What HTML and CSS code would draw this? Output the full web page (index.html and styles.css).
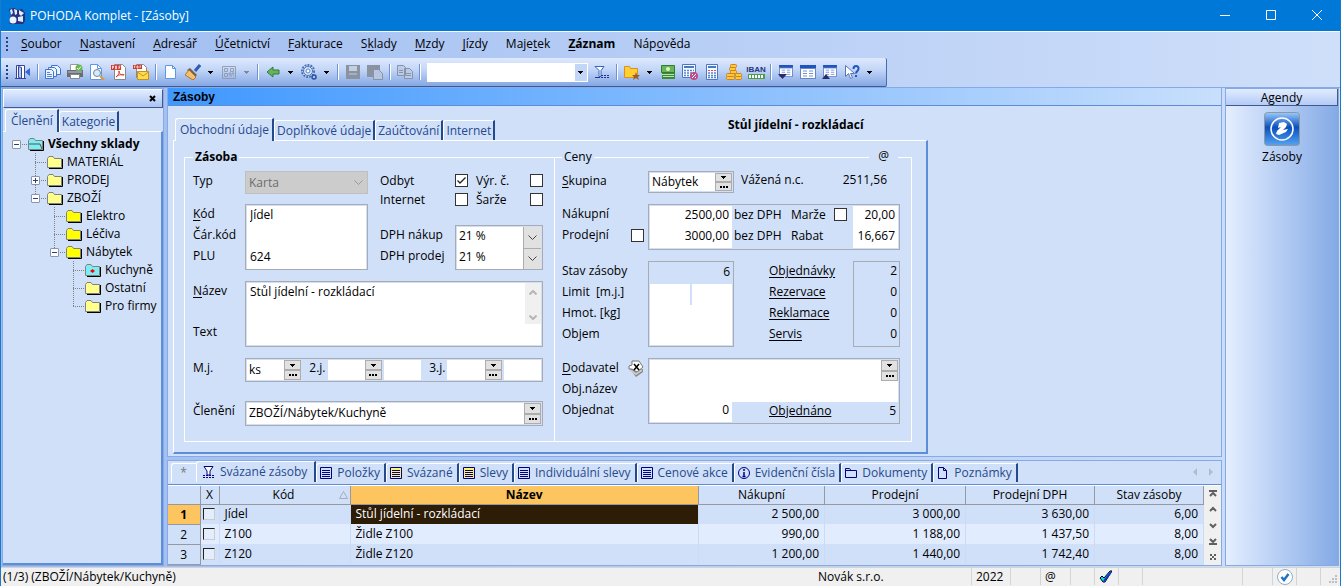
FILE: index.html
```
<!DOCTYPE html>
<html lang="cs">

<head>
    <meta charset="UTF-8">
    <meta name="viewport" content="width=device-width, initial-scale=1">
    <title>POHODA Komplet - [Zásoby]</title>
    <link rel="stylesheet" href="styles.css">
</head>

<body>
    <!-- Sdílené ikony -->
    <svg class="sprite" aria-hidden="true">
        <symbol id="caret" viewBox="0 0 5 3"><path d="M0 0h5v1H0zM1 1h3v1H1zM2 2h1v1H2z" fill="currentColor"/></symbol>
        <symbol id="dots" viewBox="0 0 8 2"><path d="M0 0h2v2H0zM3 0h2v2H3zM6 0h2v2H6z" fill="currentColor"/></symbol>
        <symbol id="folder" viewBox="0 0 16 13">
            <path d="M2 12.500h13.500V3" fill="none" stroke="#000" stroke-width="1"/>
            <path d="M.5 11.500V2.500L2 .5h4l1.500 2h7v9z" fill="var(--folder, #ffff8c)" stroke="#808080"/>
        </symbol>
        <symbol id="list" viewBox="0 0 12 12">
            <path d="M.5.5h11v11H.5z" fill="var(--list, none)" stroke="#000080"/>
            <path d="M2 3.500h8M2 5.500h8M2 7.500h8M2 9.500h8" stroke="#000080"/>
        </symbol>
        <symbol id="window" viewBox="0 0 16 14"><path d="M0 0h16v14H0z" fill="#6884c4"/><path d="M1 4h14v9H1z" fill="#fff"/><path d="M0 0h16v3H0z" fill="#1f53c0"/><path d="M3 6h4M9 6h4M3 8.500h4M9 8.500h4M3 11h4M9 11h4" stroke="#6f93d8"/></symbol>
    </svg>

    <header class="titlebar">
        <svg class="logo" viewBox="0 0 16 16"><path d="M0 1l5-1 4 2 4-1 3 4v8l-2 3H1L0 12l2-4z" fill="#2b2f7c"/><circle cx="4" cy="12" r="3.500" fill="#e8f4ff"/><path d="M1 2l2-1 1 4-2 2zM5 1l3 1v4L6 7zM10 2l5 3-3 3-2-2zM9 9l5-1v6l-5-1z" fill="#d8eeff"/></svg>
        <h1>POHODA Komplet - [Zásoby]</h1>
        <div class="window-buttons">
            <button type="button" aria-label="Minimalizovat"><svg viewBox="0 0 10 10"><path d="M0 5.500h10"/></svg></button>
            <button type="button" aria-label="Maximalizovat"><svg viewBox="0 0 10 10"><path d="M.5.5h9v9h-9z"/></svg></button>
            <button type="button" aria-label="Zavřít"><svg viewBox="0 0 10 10"><path d="M0 0l10 10M10 0L0 10"/></svg></button>
        </div>
    </header>

    <div class="bars">
        <nav class="menu">
            <span class="grip"></span>
            <a href="#"><u>S</u>oubor</a>
            <a href="#"><u>N</u>astavení</a>
            <a href="#"><u>A</u>dresář</a>
            <a href="#"><u>Ú</u>četnictví</a>
            <a href="#"><u>F</u>akturace</a>
            <a href="#">S<u>k</u>lady</a>
            <a href="#"><u>M</u>zdy</a>
            <a href="#"><u>J</u>ízdy</a>
            <a href="#">Maje<u>t</u>ek</a>
            <a href="#" class="strong"><u>Z</u>áznam</a>
            <a href="#">Náp<u>o</u>věda</a>
        </nav>

        <div class="toolbar">
            <span class="grip"></span>
            <button type="button" class="tool" aria-label="Konec"><svg viewBox="0 0 16 16"><path d="M1.500 14.500v-13h8v13" fill="#fff" stroke="#34459b"/><path d="M3.500 2.500l3 1v11l-3-1z" fill="#b8c6ea" stroke="#34459b"/><path d="M0 14.500h11" stroke="#34459b"/><path d="M15 4v8l-5-4z" fill="#3565d8"/></svg></button>
            <i class="sep"></i>
            <button type="button" class="tool" aria-label="Agendy"><svg viewBox="0 0 16 16"><g fill="#eaf2ff" stroke="#3d76cc"><path d="M6.500 1.500h6l3 3v6h-9z"/><path d="M3.500 3.500h6l2 2v7h-8z"/><path d="M.5 5.500h6l2 2v7h-8z"/></g><path d="M2 8.500h3M2 10.500h5M2 12.500h5" stroke="#5a88d0"/></svg></button>
            <button type="button" class="tool" aria-label="Tisk"><svg viewBox="0 0 16 16"><path d="M3.500.5h8v6h-8z" fill="#fff" stroke="#999"/><path d="M0 6h16v7H0z" fill="#686d75"/><path d="M1 8h14" stroke="#c4c8cc"/><path d="M3.500 10.500h9v4h-9z" fill="#fff" stroke="#888"/><circle cx="12" cy="4" r="3.500" fill="#69b657"/><path d="M10 4l1.500 1.500 2.500-3" fill="none" stroke="#fff"/></svg></button>
            <button type="button" class="tool" aria-label="Náhled"><svg viewBox="0 0 16 16"><path d="M1.500.5h7l4 4v11h-11z" fill="#fff" stroke="#5f98e0"/><path d="M8.500.5v4h4" fill="none" stroke="#5f98e0"/><circle cx="8" cy="9" r="3.500" fill="#d5eaff" stroke="#71869f"/><path d="M11 12l4 4" stroke="#e29931" stroke-width="2"/></svg></button>
            <button type="button" class="tool" aria-label="PDF"><svg viewBox="0 0 16 16"><path d="M3.500.5h8l3 3v12h-11z" fill="#fff" stroke="#888"/><path d="M0 1h10v5H0z" fill="#d63a2f"/><path d="M1.500 5V2h1v1.500h-1M4.500 2v3h1V2zM8 5V2h1.500M8 3.500h1" fill="none" stroke="#fff" stroke-width=".7"/><path d="M5 13c3-2 4-6 3-6s1 5 5 4c1-1-5-1-8 2z" fill="none" stroke="#d63a2f"/></svg></button>
            <button type="button" class="tool" aria-label="PDF e-mailem"><svg viewBox="0 0 16 16"><path d="M3.500.5h7l3 3v10h-10z" fill="#fff" stroke="#888"/><path d="M0 1h9v4H0z" fill="#d63a2f"/><path d="M1.500 4V2h1M4 2v2h1V2zM7 4V2h1" fill="none" stroke="#fff" stroke-width=".7"/><path d="M4.500 7.500h11v8h-11z" fill="#ffdc4d" stroke="#c9901a"/><path d="M4.500 8l5.500 4 5.500-4" fill="none" stroke="#c9901a"/></svg></button>
            <i class="sep"></i>
            <button type="button" class="tool" aria-label="Nový"><svg viewBox="0 0 16 16"><path d="M2.500 1.500h7l3 3v10h-10z" fill="#fff" stroke="#5f98e0"/><path d="M9.500 1.500v3h3" fill="none" stroke="#5f98e0"/></svg></button>
            <button type="button" class="tool" aria-label="Vyčistit"><svg viewBox="0 0 16 16"><path d="M15 1l-5 6" stroke="#315caf" stroke-width="3"/><path d="M5 4l7 7-2 2-8-7z" fill="#6e6258"/><path d="M4 6l7 7-3 3-8-5z" fill="#f2c070" stroke="#b9731c"/></svg></button>
            <button type="button" class="drop" aria-label="Možnosti"><svg><use href="#caret"/></svg></button>
            <button type="button" class="tool gray" aria-label="QR kód"><svg viewBox="0 0 16 16"><path d="M1.500 2.500h13v12h-13z" fill="none" stroke="#8b93a2"/><path d="M3.500 4.500h3v3h-3zM9.500 4.500h3v3h-3zM3.500 9.500h3v3h-3zM8 9h2v2H8zM11 9h2v1h-2zM9 12h2M12 12h1" fill="none" stroke="#8b93a2"/></svg></button>
            <button type="button" class="drop gray" aria-label="Možnosti"><svg><use href="#caret"/></svg></button>
            <i class="sep"></i>
            <button type="button" class="tool" aria-label="Zpět"><svg viewBox="0 0 16 16"><path d="M2 8l6-5v3h6v4H8v3z" fill="#68b35c" stroke="#317c35"/></svg></button>
            <button type="button" class="drop" aria-label="Možnosti"><svg><use href="#caret"/></svg></button>
            <button type="button" class="tool" aria-label="Nastavení"><svg viewBox="0 0 16 16"><circle cx="7" cy="7" r="6" fill="#e8f0fc" stroke="#4872b8" stroke-width="2" stroke-dasharray="2 1"/><circle cx="7" cy="7" r="4.500" fill="#d5e3f8" stroke="#4872b8"/><circle cx="7" cy="7" r="2" fill="#fff" stroke="#5d82c4"/><circle cx="13" cy="13" r="2" fill="#a8c4ef" stroke="#274f9e" stroke-width="1.500"/></svg></button>
            <button type="button" class="drop" aria-label="Možnosti"><svg><use href="#caret"/></svg></button>
            <i class="sep"></i>
            <button type="button" class="tool" aria-label="Uložit"><svg viewBox="0 0 16 16"><path d="M1 1h14v14H1z" fill="#8a93a2"/><path d="M4 2h8v5H4z" fill="#c3cedf"/><path d="M4 10h8" stroke="#c3cedf"/></svg></button>
            <button type="button" class="tool" aria-label="Uložit kopii"><svg viewBox="0 0 16 16"><path d="M0 1h13v12H0z" fill="#8a93a2"/><path d="M6.500 5.500h5l4 4v6h-9z" fill="#b7c7e3" stroke="#8a93a2"/></svg></button>
            <i class="sep"></i>
            <button type="button" class="tool" aria-label="Kopírovat"><svg viewBox="0 0 16 16"><path d="M.5 1.500h6l2 2v8h-8zM7.500 4.500h5l3 3v7h-8z" fill="#bccbe7" stroke="#8793a8"/><path d="M2 6.500h4M2 8.500h4M9 9.500h5M9 11.500h5" stroke="#8793a8"/></svg></button>
            <i class="sep"></i>
            <div class="search">
                <input type="text" aria-label="Hledat">
                <button type="button" aria-label="Rozbalit"><svg><use href="#caret"/></svg></button>
            </div>
            <button type="button" class="tool" aria-label="Filtr"><svg viewBox="0 0 16 16"><path d="M1 2.500h9L7 6.500v6H5v-6z" fill="#fff" stroke="#3565c0"/><path d="M1 13.500h5M7 11.500h2M10 11.500h2M13 11.500h2M7 13.500h2M10 13.500h2M13 13.500h2" stroke="#27348b"/></svg></button>
            <i class="sep"></i>
            <button type="button" class="tool" aria-label="Oblíbené"><svg viewBox="0 0 16 16"><path d="M.5 13.500v-11h5l1 2h7v9z" fill="#ffd02e" stroke="#dc8d2a"/><path d="M12 8l1 3h3l-2 2 1 3-3-2-3 2 1-3-2-2h3z" fill="#99602c"/></svg></button>
            <button type="button" class="drop" aria-label="Možnosti"><svg><use href="#caret"/></svg></button>
            <button type="button" class="tool" aria-label="Peníze"><svg viewBox="0 0 16 16"><path d="M2 8h13v7H2z" fill="#3a8b3d"/><path d="M2 10.500h12M3 12.500h11" stroke="#bee0a3"/><path d="M1.500 1.500h13v7h-13z" fill="#69b657" stroke="#337c36"/><circle cx="8" cy="5" r="2" fill="#e0f2c8"/></svg></button>
            <button type="button" class="tool" aria-label="Kalkulačka daně"><svg viewBox="0 0 16 16"><path d="M.5.5h13v13H.5z" fill="#f4f8ff" stroke="#4a78c2"/><path d="M2 3h10" stroke="#4a78c2" stroke-width="2"/><path d="M2 6.500h10M2 9h10M2 11.500h10" stroke="#5d87cc" stroke-width="1.500" stroke-dasharray="2 1"/><circle cx="12" cy="12" r="4" fill="#be4c87"/><path d="M10 14l4-4M10 10.500h1M13 13.500h1" stroke="#fff"/></svg></button>
            <button type="button" class="tool" aria-label="Kalkulačka"><svg viewBox="0 0 16 16"><path d="M2.500.5h11v15h-11z" fill="#f4f8ff" stroke="#4a78c2"/><path d="M4 3h8" stroke="#4a78c2" stroke-width="2"/><path d="M4 6.500h8" stroke="#e05048" stroke-dasharray="2 1"/><path d="M4 9h8M4 11.500h8M4 13.500h8" stroke="#5d87cc" stroke-width="1.500" stroke-dasharray="2 1"/></svg></button>
            <button type="button" class="tool" aria-label="Pokladna"><svg viewBox="0 0 16 16"><g fill="#ffc93a" stroke="#cd831b"><rect x="4.500" y=".5" width="6" height="3" rx="1"/><rect x="3.500" y="3.500" width="6" height="3" rx="1"/><rect x="4.500" y="6.500" width="6" height="3" rx="1"/><rect x=".5" y="9.500" width="8" height="3" rx="1"/><rect x=".5" y="12.500" width="8" height="3" rx="1"/><rect x="9.500" y="9.500" width="6" height="3" rx="1"/><rect x="9.500" y="12.500" width="6" height="3" rx="1"/></g></svg></button>
            <button type="button" class="tool iban" aria-label="Kontrola IBAN">IBAN<span></span></button>
            <i class="sep"></i>
            <button type="button" class="tool" aria-label="Okno dolů"><svg viewBox="0 0 16 16"><use href="#window" y="1" width="16" height="12"/><path d="M0 10h9l-4.500 5z" fill="#282c68"/></svg></button>
            <button type="button" class="tool" aria-label="Okno"><svg viewBox="0 0 16 16"><use href="#window" y="1" width="16" height="14"/></svg></button>
            <button type="button" class="tool" aria-label="Okno nahoru"><svg viewBox="0 0 16 16"><use href="#window" y="1" width="16" height="12"/><path d="M0 15h8l-4-5z" fill="#282c68"/></svg></button>
            <button type="button" class="tool" aria-label="Nápověda"><svg viewBox="0 0 16 16"><path d="M1.500 1.500v11l3-3 2 5 2-1-2-4h4z" fill="#fff" stroke="#5778b8"/><path d="M9.500 5c0-4 5.500-4 5 0 0 2-2.500 2-2.500 4.500M12 11v2" fill="none" stroke="#2455bd" stroke-width="2"/></svg></button>
            <button type="button" class="drop" aria-label="Možnosti"><svg><use href="#caret"/></svg></button>
        </div>
    </div>

    <main>
        <aside class="tree-panel">
            <div class="panel-head"><button type="button" aria-label="Zavřít panel"><svg viewBox="0 0 7 7"><path d="M1 1l5 5M6 1L1 6"/></svg></button></div>
            <div class="tabs">
                <button type="button" class="tab active">Členění</button>
                <button type="button" class="tab">Kategorie</button>
            </div>
            <div class="tree-body">
                <ul class="tree">
                    <li>
                        <div class="node root"><button type="button" class="toggle" aria-label="Sbalit"></button><svg class="cyan"><use href="#folder"/><path d="M1 6h11l2 5" fill="none" stroke="#555"/></svg>Všechny sklady</div>
                        <ul>
                            <li><div class="node"><i></i><svg><use href="#folder"/></svg>MATERIÁL</div></li>
                            <li><div class="node"><button type="button" class="toggle plus" aria-label="Rozbalit"></button><svg><use href="#folder"/></svg>PRODEJ</div></li>
                            <li>
                                <div class="node"><button type="button" class="toggle" aria-label="Sbalit"></button><svg><use href="#folder"/></svg>ZBOŽÍ</div>
                                <ul>
                                    <li><div class="node"><i></i><svg class="yellow"><use href="#folder"/></svg>Elektro</div></li>
                                    <li><div class="node"><i></i><svg class="yellow"><use href="#folder"/></svg>Léčiva</div></li>
                                    <li>
                                        <div class="node"><button type="button" class="toggle" aria-label="Sbalit"></button><svg class="yellow"><use href="#folder"/></svg>Nábytek</div>
                                        <ul>
                                            <li><div class="node"><i></i><svg class="cyan"><use href="#folder"/><path d="M5 7l2.500-2L10 7 7.500 9z" fill="#f00"/></svg>Kuchyně</div></li>
                                            <li><div class="node"><i></i><svg><use href="#folder"/></svg>Ostatní</div></li>
                                            <li><div class="node"><i></i><svg><use href="#folder"/></svg>Pro firmy</div></li>
                                        </ul>
                                    </li>
                                </ul>
                            </li>
                        </ul>
                    </li>
                </ul>
            </div>
        </aside>

        <div class="center">
            <section class="agenda">
                <h2>Zásoby</h2>
                <form class="form">
                    <div class="form-head">
                        <div class="tabs">
                            <button type="button" class="tab active">Obchodní údaje</button>
                            <button type="button" class="tab">Doplňkové údaje</button>
                            <button type="button" class="tab">Zaúčtování</button>
                            <button type="button" class="tab">Internet</button>
                        </div>
                        <strong>Stůl jídelní - rozkládací</strong>
                    </div>
                    <div class="sheet">
                        <fieldset class="stock">
                            <legend>Zásoba</legend>
                            <div class="upper">
                                <div class="stack">
                                    <div class="row">
                                        <div class="labels"><label for="typ">Typ</label></div>
                                        <select id="typ" class="typ" disabled><option>Karta</option></select>
                                    </div>
                                    <div class="row">
                                        <div class="labels"><label for="kod"><u>K</u>ód</label><label for="ean">Čár.kód</label><label for="plu">PLU</label></div>
                                        <div class="box codes"><input id="kod" value="Jídel"><input id="ean"><input id="plu" value="624"></div>
                                    </div>
                                </div>
                                <div class="stack options">
                                    <div class="checks">
                                        <label for="odbyt">Odbyt</label><input type="checkbox" id="odbyt" checked>
                                        <label for="vyr">Výr. č.</label><input type="checkbox" id="vyr">
                                        <label for="inet">Internet</label><input type="checkbox" id="inet">
                                        <label for="sarze">Šarže</label><input type="checkbox" id="sarze">
                                    </div>
                                    <div class="row">
                                        <div class="labels vat"><label for="dphn">DPH nákup</label><label for="dphp">DPH prodej</label></div>
                                        <div class="box vat-box">
                                            <select id="dphn"><option>21 %</option></select>
                                            <select id="dphp"><option>21 %</option></select>
                                        </div>
                                    </div>
                                </div>
                            </div>
                            <div class="row">
                                <div class="labels spread"><label for="nazev"><u>N</u>ázev</label><label for="text">Text</label></div>
                                <div class="box grow">
                                    <div class="name-line">
                                        <textarea id="nazev">Stůl jídelní - rozkládací</textarea>
                                        <div class="scroll"><svg viewBox="0 0 8 5"><path d="M.5 4.500L4 1l3.500 3.500"/></svg><svg viewBox="0 0 8 5"><path d="M.5.5L4 4 7.500.5"/></svg></div>
                                    </div>
                                    <input id="text">
                                </div>
                            </div>
                            <div class="row">
                                <div class="labels"><label for="mj">M.j.</label></div>
                                <div class="box grow units">
                                    <input id="mj" value="ks"><span class="pick"><button type="button" aria-label="Rozbalit"><svg><use href="#caret"/></svg></button><button type="button" aria-label="Vybrat"><svg class="dots"><use href="#dots"/></svg></button></span>
                                    <label for="mj2">2.j.</label>
                                    <input id="mj2"><span class="pick"><button type="button" aria-label="Rozbalit"><svg><use href="#caret"/></svg></button><button type="button" aria-label="Vybrat"><svg class="dots"><use href="#dots"/></svg></button></span>
                                    <input class="coef" aria-label="Koeficient 2.j.">
                                    <label for="mj3">3.j.</label>
                                    <input id="mj3"><span class="pick"><button type="button" aria-label="Rozbalit"><svg><use href="#caret"/></svg></button><button type="button" aria-label="Vybrat"><svg class="dots"><use href="#dots"/></svg></button></span>
                                    <input class="coef" aria-label="Koeficient 3.j.">
                                </div>
                            </div>
                            <div class="row group">
                                <div class="labels"><label for="cleneni">Členění</label></div>
                                <div class="box grow combo">
                                    <input id="cleneni" value="ZBOŽÍ/Nábytek/Kuchyně"><span class="pick"><button type="button" aria-label="Rozbalit"><svg><use href="#caret"/></svg></button><button type="button" aria-label="Vybrat"><svg class="dots"><use href="#dots"/></svg></button></span>
                                </div>
                            </div>
                        </fieldset>

                        <fieldset class="prices">
                            <legend>Ceny</legend>
                            <span class="at">@</span>
                            <div class="row">
                                <div class="labels"><label for="skupina"><u>S</u>kupina</label></div>
                                <div class="box combo short">
                                    <input id="skupina" value="Nábytek"><span class="pick"><button type="button" aria-label="Rozbalit"><svg><use href="#caret"/></svg></button><button type="button" aria-label="Vybrat"><svg class="dots"><use href="#dots"/></svg></button></span>
                                </div>
                                <div class="avg"><label for="vnc">Vážená n.c.</label><output id="vnc">2511,56</output></div>
                            </div>
                            <div class="row">
                                <div class="labels">
                                    <label for="nakupni">Nákupní</label>
                                    <span class="with-check"><label for="prodejni">Prodejní</label><input type="checkbox" aria-label="Pevná prodejní cena"></span>
                                </div>
                                <div class="box price-box">
                                    <input id="nakupni" value="2500,00"><span>bez DPH</span><label for="marze">Marže</label><input type="checkbox" aria-label="Pevná marže"><input id="marze" value="20,00">
                                    <input id="prodejni" value="3000,00"><span>bez DPH</span><label for="rabat">Rabat</label><i></i><input id="rabat" value="16,667">
                                </div>
                            </div>
                            <div class="row">
                                <div class="labels"><label for="stav">Stav zásoby</label><label for="limit" class="pre">Limit  [m.j.]</label><label for="hmot">Hmot. [kg]</label><label for="objem">Objem</label></div>
                                <div class="box amounts">
                                    <input id="stav" value="6" readonly>
                                    <div class="split"><input id="limit"><input aria-label="Horní limit"></div>
                                    <input id="hmot"><input id="objem">
                                </div>
                                <div class="links"><a href="#">Objednávky</a><a href="#">Rezervace</a><a href="#">Reklamace</a><a href="#">Servis</a></div>
                                <div class="box counts"><output>2</output><output>0</output><output>0</output><output>0</output></div>
                            </div>
                            <div class="row">
                                <div class="labels">
                                    <span class="with-check"><label for="dodavatel"><u>D</u>odavatel</label>
                                        <svg class="supplier" viewBox="0 0 16 18"><path d="M1 8l7 9 7-5V9z" fill="#858585"/><path d="M2 10l6 4 6-4" fill="none" stroke="#ccc" stroke-width="2"/><path d="M1 6l3-1V1h7l4 6-6 5-5-3H1z" fill="#fff" stroke="#777"/><path d="M6 4l5 6M11 4l-5 6" stroke="#000" stroke-width="1.500"/></svg></span>
                                    <label for="objnazev">Obj.název</label><label for="objednat">Objednat</label>
                                </div>
                                <div class="box order">
                                    <div class="supplier-line"><input id="dodavatel"><span class="pick"><button type="button" aria-label="Rozbalit"><svg><use href="#caret"/></svg></button><button type="button" aria-label="Vybrat"><svg class="dots"><use href="#dots"/></svg></button></span></div>
                                    <input id="objnazev">
                                    <div class="order-line"><input id="objednat" value="0"><a href="#">Objednáno</a><output>5</output></div>
                                </div>
                            </div>
                        </fieldset>
                    </div>
                </form>
            </section>

            <section class="details">
                <div class="detail-tabs">
                    <button type="button" class="dtab star">*</button>
                    <button type="button" class="dtab active"><svg viewBox="0 0 12 12"><path d="M1 .5h9L7 5v4H4V5z" fill="#fff" stroke="#000080"/><path d="M0 9.500h11M0 11.500h11" stroke="#000080" stroke-dasharray="2 1"/></svg>Svázané zásoby</button>
                    <button type="button" class="dtab"><svg><use href="#list"/></svg>Položky</button>
                    <button type="button" class="dtab"><svg class="lemon"><use href="#list"/></svg>Svázané</button>
                    <button type="button" class="dtab"><svg class="lemon"><use href="#list"/></svg>Slevy</button>
                    <button type="button" class="dtab"><svg><use href="#list"/></svg>Individuální slevy</button>
                    <button type="button" class="dtab"><svg><use href="#list"/></svg>Cenové akce</button>
                    <button type="button" class="dtab"><svg viewBox="0 0 12 12"><circle cx="6" cy="6" r="5.500" fill="none" stroke="#000080"/><path d="M6 5v5M6 2v2M4.500 9.500h3" stroke="#000080" stroke-width="1.500"/></svg>Evidenční čísla</button>
                    <button type="button" class="dtab"><svg viewBox="0 0 12 12"><path d="M.5 10.500v-9h4l1.500 2h5.500v7zM.5 3.500H6" fill="none" stroke="#000080"/></svg>Dokumenty</button>
                    <button type="button" class="dtab"><svg viewBox="0 0 12 12"><path d="M1.500.5h5l3 3v8h-8zM6.500.5v3h3" fill="none" stroke="#000080"/></svg>Poznámky</button>
                    <span class="arrows"><svg viewBox="0 0 4 8"><path d="M4 0v8L0 4z"/></svg><svg viewBox="0 0 4 8"><path d="M0 0v8l4-4z"/></svg></span>
                </div>
                <div class="grid-wrap">
                    <table>
                        <colgroup><col class="c-num"><col class="c-x"><col class="c-code"><col><col class="c-buy"><col class="c-sell"><col class="c-vat"><col class="c-state"></colgroup>
                        <thead>
                            <tr><th></th><th>X</th><th class="sorted">Kód <svg viewBox="0 0 9 8"><path d="M.5 7.500h8L4.500.5z" fill="none" stroke="#a5adbd"/></svg></th><th class="current">Název</th><th>Nákupní</th><th>Prodejní</th><th>Prodejní DPH</th><th>Stav zásoby</th></tr>
                        </thead>
                        <tbody>
                            <tr><th class="current">1</th><td class="mark"><input type="checkbox" aria-label="Označit Jídel"></td><td>Jídel</td><td class="selected">Stůl jídelní - rozkládací</td><td>2 500,00</td><td>3 000,00</td><td>3 630,00</td><td>6,00</td></tr>
                            <tr><th>2</th><td class="mark"><input type="checkbox" aria-label="Označit Z100"></td><td>Z100</td><td>Židle Z100</td><td>990,00</td><td>1 188,00</td><td>1 437,50</td><td>8,00</td></tr>
                            <tr><th>3</th><td class="mark"><input type="checkbox" aria-label="Označit Z120"></td><td>Z120</td><td>Židle Z120</td><td>1 200,00</td><td>1 440,00</td><td>1 742,40</td><td>8,00</td></tr>
                        </tbody>
                    </table>
                    <div class="grid-scroll">
                        <svg viewBox="0 0 8 7"><path d="M0 1h8M1 6l3-3 3 3"/></svg>
                        <svg viewBox="0 0 8 7"><path d="M1 5l3-3 3 3"/></svg>
                        <svg viewBox="0 0 8 7"><path d="M1 2l3 3 3-3"/></svg>
                        <svg viewBox="0 0 8 7"><path d="M1 1l3 3 3-3M0 6h8"/></svg>
                        <svg viewBox="0 0 8 7"><path d="M1 1h2M5 1h2M3 3h2M1 5h2M5 5h2"/></svg>
                    </div>
                </div>
            </section>
        </div>

        <aside class="agendas">
            <h2>Agendy</h2>
            <button type="button">
                <svg viewBox="0 0 36 34">
                    <defs><linearGradient id="blue" x2="0" y2="1"><stop offset="0" stop-color="#9acbff"/><stop offset=".45" stop-color="#0a50bd"/><stop offset="1" stop-color="#55a4f4"/></linearGradient></defs>
                    <rect x=".5" y=".5" width="35" height="33" rx="3" fill="url(#blue)" stroke="#92979b"/>
                    <circle cx="18" cy="17" r="11" fill="none" stroke="#fff" stroke-width="1.500"/>
                    <path d="M15 11l5-1 3 2-1 3-3 3 5-1-2 3-7 3-3-1 1-3 4-4-3 1z" fill="#fff"/>
                </svg>
                Zásoby
            </button>
        </aside>
    </main>

    <footer class="status">
        <span class="path">(1/3) (ZBOŽÍ/Nábytek/Kuchyně)</span>
        <span class="company">Novák s.r.o.</span>
        <span class="s-year">2022</span>
        <span class="s-mid"></span>
        <span class="s-mid">@</span>
        <span class="s-small"></span>
        <span class="s-small"><svg class="check" viewBox="0 0 13 13"><path d="M1 8l2-2 2 2 6-7h2L6 12H4z" fill="#00d8ff" stroke="#000"/><path d="M5 11l7-9" stroke="#1038d0" stroke-width="2"/></svg></span>
        <span class="s-small"></span>
        <span class="s-wide"></span>
        <span class="s-mid"></span>
        <span class="s-small"><svg class="round" viewBox="0 0 16 16"><circle cx="8" cy="8" r="7.500" fill="#fff" stroke="#92aec4"/><path d="M4.500 8l2.500 3 4.500-6" fill="none" stroke="#1d73c5" stroke-width="2.500"/></svg></span>
        <span class="s-small"></span>
        <span class="s-size"><svg viewBox="0 0 9 9"><path d="M6 0h2v2H6zM3 3h2v2H3zM6 3h2v2H6zM0 6h2v2H0zM3 6h2v2H3zM6 6h2v2H6z" fill="#bfbfbf"/></svg></span>
    </footer>
</body>

</html>
```
FILE: styles.css
```
:root {
    --bg: #d1e0f9;
    --line: #86aae6;
    --blue: #5c8dd6;
    --navy: #254a8c;
    --gray: #a9abb3;
}

* {
    margin: 0;
    padding: 0;
    box-sizing: border-box;
}

body {
    display: flex;
    flex-direction: column;
    min-height: 100vh;
    font: 12px/18px 'Open Sans', 'Noto Sans', sans-serif;
    color: #000;
    background: linear-gradient(90deg, #9ebcf0, #cfdffa);
    border: 1px solid #1979ca;
    border-top: none;
}

button,
input,
select,
textarea {
    font: inherit;
    color: inherit;
    border: none;
    border-radius: 0;
    outline: none;
    background: none;
}

input:not([type]),
input[type="text"] {
    min-width: 0;
    background: #fff;
}

a {
    color: inherit;
}

ul {
    list-style: none;
}

u {
    text-underline-offset: 2px;
}

input[type="checkbox"] {
    appearance: none;
    width: 13px;
    height: 13px;
    border: 1px solid #333;
    background: #fff;
}

input[type="checkbox"]:checked {
    background: #fff url("data:image/svg+xml,%3Csvg xmlns='http://www.w3.org/2000/svg' viewBox='0 0 11 11'%3E%3Cpath d='M1.500 5.500L4 8l5.500-5.500' fill='none' stroke='%23222' stroke-width='1.300'/%3E%3C/svg%3E") center / 11px;
}

.sprite {
    position: absolute;
    width: 0;
    height: 0;
}

/* Titulek okna */
.titlebar {
    display: flex;
    align-items: center;
    height: 31px;
    padding-left: 8px;
    color: #fff;
    background: #0078d7;
}

.titlebar h1 {
    flex: 1;
    font-size: 12px;
    font-weight: 400;
}

.logo {
    width: 16px;
    height: 16px;
    margin-right: 5px;
}

.window-buttons {
    display: flex;
}

.window-buttons button {
    width: 46px;
    height: 31px;
}

.window-buttons svg {
    width: 10px;
    height: 10px;
    fill: none;
    stroke: #fff;
}

/* Nabídka a lišta nástrojů */
.bars {
    border-top: 1px solid #fff;
}

.menu {
    display: flex;
    align-items: center;
    height: 26px;
    padding-bottom: 2px;
}

.menu a {
    padding: 0 9px;
    text-decoration: none;
}

.menu .strong {
    font-weight: 700;
}

.grip {
    width: 3px;
    height: 15px;
    margin: 0 3px 0 5px;
    background: repeating-linear-gradient(#27417d 0 2px, transparent 2px 4px) left / 2px 100% no-repeat;
}

.toolbar {
    display: flex;
    align-items: center;
    width: fit-content;
    height: 29px;
    padding-right: 9px;
    background: linear-gradient(#dfe9fe, #c3d7f8 40%, #84a7e3);
    border-right: 1px solid #4a6aa8;
    border-bottom: 1px solid #3c5a94;
    border-radius: 0 2px 2px 0;
}

.tool {
    display: flex;
    flex: none;
    align-items: center;
    justify-content: center;
    width: 22px;
    height: 24px;
}

.tool svg {
    width: 16px;
    height: 16px;
}

.gray {
    opacity: 0.8;
}

.drop {
    flex: none;
    width: 14px;
    height: 24px;
    padding-left: 4px;
}

.drop svg,
.search svg,
.pick svg {
    display: block;
    width: 5px;
    height: 3px;
}

.drop.gray {
    color: #777;
}

.sep {
    width: 2px;
    height: 16px;
    margin: 0 3px;
    background: linear-gradient(90deg, #7192cc 50%, #fff 50%);
}

.search {
    display: flex;
    width: 161px;
    height: 19px;
    margin: 0 3px;
    background: #fff;
}

.search input {
    flex: 1;
}

.search button {
    width: 12px;
    padding-left: 3px;
    margin: 1px;
    background: #c2d7f8;
}

.iban {
    flex-direction: column;
    font: 700 8px/9px 'Liberation Sans', sans-serif;
    color: #27347b;
}

.iban span {
    width: 17px;
    height: 5px;
    background: repeating-linear-gradient(90deg, #fff 0 2px, #4f9e44 2px 3px);
    border: 1px solid #4f9e44;
}

/* Rozvržení */
main {
    display: flex;
    flex: 1;
    gap: 3px;
    padding: 0 1px 1px;
    border-top: 1px solid var(--line);
}

/* Strom členění */
.tree-panel {
    display: flex;
    flex-direction: column;
    flex: none;
    width: 162px;
    background: var(--bg);
    border: 1px solid var(--line);
}

.panel-head {
    display: flex;
    align-items: center;
    justify-content: flex-end;
    height: 19px;
    padding-right: 6px;
    background: linear-gradient(#e2ecff, #a9c4f4);
    border: 1px solid #fff;
    border-right-color: #41598c;
    border-bottom-color: #41598c;
}

.panel-head svg {
    display: block;
    width: 7px;
    height: 7px;
    stroke: #000;
    stroke-width: 2;
}

.tabs {
    display: flex;
    align-items: flex-end;
    height: 24px;
    padding-left: 2px;
}

.tab {
    height: 20px;
    padding: 0 2px;
    line-height: 18px;
    color: var(--navy);
    white-space: nowrap;
    border: 1px solid #fff;
    border-right: 2px solid var(--navy);
    border-bottom: none;
    border-radius: 3px 0 0 0;
}

.tab.active {
    height: 23px;
    padding: 0 3px 0 4px;
    margin-bottom: -1px;
    background: var(--bg);
    z-index: 1;
}

.tree-panel .tabs {
    height: 23px;
}

.tree-panel .tab.active {
    padding: 0 4px 0 5px;
}

.tree-body {
    flex: 1;
    padding: 3px 0 0 9px;
    border-top: 1px solid #fff;
    border-right: 2px solid var(--blue);
    border-bottom: 2px solid var(--blue);
}

.tree li {
    background:
        repeating-linear-gradient(#808080 0 1px, transparent 1px 2px) 4px 0 / 1px 100% no-repeat,
        repeating-linear-gradient(90deg, #808080 0 1px, transparent 1px 2px) 4px 9px / 12px 1px no-repeat;
}

.tree li:last-child {
    background-size: 1px 9px, 12px 1px;
}

.tree > li:last-child {
    background-size: 0 0, 12px 1px;
}

.tree ul {
    padding-left: 19px;
}

.node {
    display: flex;
    align-items: center;
    height: 18px;
    white-space: nowrap;
}

.node i {
    width: 9px;
}

.node svg {
    width: 16px;
    height: 13px;
    margin: 0 4px 0 7px;
}

.root {
    font-weight: 700;
}

.cyan {
    --folder: #7beef5;
}

.yellow {
    --folder: #ffff00;
}

.toggle {
    width: 9px;
    height: 9px;
    border: 1px solid #8c96a8;
    border-radius: 1px;
    background: linear-gradient(#27418b, #27418b) center / 5px 1px no-repeat, #fff;
}

.plus {
    background: linear-gradient(#27418b, #27418b) center / 5px 1px no-repeat, linear-gradient(#27418b, #27418b) center / 1px 5px no-repeat, #fff;
}

/* Formulář */
.center {
    display: flex;
    flex: 1;
    flex-direction: column;
    gap: 3px;
    min-width: 0;
}

.agenda {
    flex: 1;
    background: var(--bg);
    border: 1px solid var(--line);
    border-top: none;
}

.agenda h2 {
    height: 18px;
    padding-left: 5px;
    font: 700 12px/18px 'Liberation Sans', sans-serif;
    background: linear-gradient(90deg, #3f98ff, #c8dffc);
    border-bottom: 1px solid var(--blue);
}

.form {
    width: 755px;
    margin: 10px 0 2px 5px;
}

.form-head {
    display: grid;
    grid-template-columns: 475px 1fr;
}

.form-head strong {
    padding-left: 80px;
    line-height: 18px;
}

.sheet {
    display: flex;
    padding: 7px 14px 10px 10px;
    border-top: 1px solid #fff;
    border-left: 1px solid #fff;
    border-right: 2px solid var(--blue);
    border-bottom: 2px solid var(--blue);
}

fieldset {
    display: flex;
    flex-direction: column;
    gap: 11px;
    position: relative;
    min-width: 0;
    padding: 5px 11px 15px 8px;
    border: 1px solid #fff;
}

legend {
    height: 18px;
    padding: 0 2px;
}

.stock {
    width: 370px;
    border-right: none;
}

.stock legend {
    font-weight: 700;
}

.prices {
    flex: 1;
    padding-left: 7px;
}

.row,
.upper {
    display: flex;
}

.upper {
    justify-content: space-between;
}

.stack {
    display: flex;
    flex-direction: column;
    justify-content: space-between;
    gap: 10px;
}

.labels {
    display: flex;
    flex: none;
    flex-direction: column;
    width: 52px;
}

.labels label,
.with-check {
    height: 21px;
    line-height: 20px;
    white-space: nowrap;
}

.prices .labels {
    width: 86px;
}

.spread {
    gap: 20px;
}

.with-check {
    display: flex;
    align-items: center;
    justify-content: space-between;
    padding-right: 4px;
}

.box {
    padding: 1px;
    border: 1px solid var(--gray);
}

.box.grow {
    flex: 1;
    min-width: 0;
}

.box > input:not([type]) {
    display: block;
    width: 100%;
    height: 21px;
    padding: 0 3px 4px;
}

select {
    appearance: none;
    background: #fff url("data:image/svg+xml,%3Csvg xmlns='http://www.w3.org/2000/svg' viewBox='0 0 9 5'%3E%3Cpath d='M.5.5l4 4 4-4' fill='none' stroke='%23999'/%3E%3C/svg%3E") right 4px center / 9px 5px no-repeat;
}

.typ {
    width: 123px;
    height: 23px;
    padding-left: 3px;
    color: #6d6d6d;
    opacity: 1;
    background-color: #ccc;
    border: 1px solid #bfbfbf;
}

.codes {
    width: 123px;
    height: 66px;
}

.options {
    width: 163px;
}

.checks {
    display: grid;
    grid-template-columns: 75px 21px 54px 13px;
    grid-auto-rows: 19px;
    align-items: center;
}

.labels.vat {
    width: 75px;
}

.vat-box {
    width: 88px;
    height: 45px;
}

.vat-box select {
    display: block;
    width: 100%;
    height: 21px;
    padding: 0 0 3px 2px;
    background: linear-gradient(#adadad, #adadad) right 17px top / 1px 100% no-repeat, url("data:image/svg+xml,%3Csvg xmlns='http://www.w3.org/2000/svg' viewBox='0 0 9 5'%3E%3Cpath d='M.5.5l4 4 4-4' fill='none' stroke='%23444'/%3E%3C/svg%3E") right 4px center / 9px 5px no-repeat, linear-gradient(#e1e1e1, #e1e1e1) right / 17px 100% no-repeat, #fff;
}

.vat-box select + select {
    background: linear-gradient(#adadad, #adadad) right top / 17px 1px no-repeat, linear-gradient(#adadad, #adadad) right 17px top / 1px 100% no-repeat, url("data:image/svg+xml,%3Csvg xmlns='http://www.w3.org/2000/svg' viewBox='0 0 9 5'%3E%3Cpath d='M.5.5l4 4 4-4' fill='none' stroke='%23444'/%3E%3C/svg%3E") right 4px center / 9px 5px no-repeat, linear-gradient(#e1e1e1, #e1e1e1) right / 17px 100% no-repeat, #fff;
}

.name-line {
    display: flex;
    height: 41px;
}

.name-line textarea {
    flex: 1;
    height: 41px;
    padding: 0 3px;
    line-height: 17px;
    resize: none;
    overflow: hidden;
    background: #fff;
}

.scroll {
    display: flex;
    flex-direction: column;
    align-items: center;
    justify-content: space-between;
    width: 16px;
    padding: 7px 0 4px;
    background: #f0f0f0;
}

.scroll svg {
    width: 8px;
    height: 5px;
    fill: none;
    stroke: #b5b5b5;
    stroke-width: 2;
}

.pick {
    display: flex;
    flex: none;
    flex-direction: column;
    width: 17px;
}

.pick button {
    display: flex;
    flex: 1;
    align-items: center;
    justify-content: center;
    background: #e1e1e1;
    border: 1px solid #adadad;
}

.pick .dots {
    width: 8px;
    height: 2px;
}

.units,
.combo {
    display: flex;
    height: 24px;
}

.units > input:not([type]),
.combo > input:not([type]) {
    flex: 1;
    width: 0;
    height: 20px;
    padding: 0 2px 1px;
}

.units label {
    padding: 0 2px 0 8px;
    line-height: 16px;
}

.units .coef {
    margin-left: 2px;
}

.group {
    padding-top: 8px;
}

.group .box {
    height: 25px;
}

.group .box > input:not([type]) {
    height: 21px;
    padding-bottom: 2px;
}

.short {
    width: 86px;
    height: 22px;
}

.short > input:not([type]) {
    height: 18px;
}

.avg {
    display: flex;
    flex: 1;
    justify-content: space-between;
    padding: 0 13px 0 7px;
}

.at {
    position: absolute;
    top: -19px;
    right: 13px;
    padding: 0 9px;
    background: var(--bg);
}

.price-box {
    display: grid;
    grid-template-columns: 82px 59px 43px 19px 45px;
    grid-auto-rows: 21px;
    width: 252px;
    height: 46px;
}

.price-box > input:not([type]) {
    padding-bottom: 5px;
    text-align: right;
}

.price-box span {
    padding-left: 2px;
}

.price-box input[type="checkbox"] {
    margin-top: 2px;
}

.labels .pre {
    white-space: pre;
}

.amounts {
    width: 86px;
    height: 86px;
}

.amounts > input,
.counts output {
    text-align: right;
}

.amounts input[readonly] {
    padding-right: 2px;
    background: transparent;
}

.amounts > input:not([type]):last-child {
    height: 19px;
}

.split {
    display: flex;
    gap: 2px;
    height: 21px;
}

.split input {
    flex: 1;
    width: 0;
}

.links {
    display: flex;
    flex: 1;
    flex-direction: column;
    align-items: flex-start;
    padding-left: 35px;
}

.links a {
    height: 21px;
    line-height: 19px;
    text-underline-offset: 2px;
}

.counts {
    width: 47px;
    padding-right: 2px;
}

.counts output {
    display: block;
    height: 21px;
    line-height: 16px;
}

.counts output:last-child {
    height: 19px;
}

.supplier {
    width: 16px;
    height: 18px;
}

.order {
    width: 252px;
    height: 66px;
}

.supplier-line,
.order-line {
    display: flex;
    height: 21px;
}

.order-line {
    height: 20px;
}

.supplier-line {
    background: #fff;
}

.supplier-line input {
    flex: 1;
}

.order-line input {
    width: 82px;
    padding: 0 3px 4px;
    text-align: right;
}

.order-line a {
    flex: 1;
    padding-left: 37px;
}

.order-line output {
    padding-right: 2px;
}

/* Spodní záložky a tabulka */
.details {
    background: var(--bg);
    border: 1px solid var(--line);
}

.detail-tabs {
    display: flex;
    align-items: flex-end;
    height: 24px;
    padding: 0 6px 2px 3px;
    border-bottom: 1px solid var(--blue);
}

.dtab {
    display: flex;
    align-items: center;
    height: 19px;
    padding: 0 4px 0 3px;
    color: var(--navy);
    white-space: nowrap;
    border-top: 1px solid #fff;
    border-left: 1px solid #fff;
    border-right: 2px solid var(--navy);
    border-radius: 3px 0 0 0;
}

.dtab svg {
    width: 12px;
    height: 12px;
    margin-right: 5px;
}

.dtab.active {
    height: 21px;
    padding: 0 7px 0 6px;
}

.dtab.star {
    width: 25px;
    justify-content: center;
    color: #777;
    border-right: none;
}

.lemon {
    --list: #fff27a;
}

.arrows {
    display: flex;
    gap: 12px;
    margin: 0 2px 6px auto;
}

.arrows svg {
    width: 4px;
    height: 8px;
    fill: #b4bccb;
}

.grid-wrap {
    display: flex;
    border-top: 1px solid #fff;
}

table {
    flex: 1;
    table-layout: fixed;
    width: 100%;
    border-collapse: collapse;
}

.c-num {
    width: 32px;
}

.c-x {
    width: 19px;
}

.c-code {
    width: 131px;
}

.c-buy {
    width: 126px;
}

.c-sell {
    width: 141px;
}

.c-vat {
    width: 129px;
}

.c-state {
    width: 109px;
}

th {
    height: 18px;
    line-height: 17px;
    font-weight: 400;
    border-right: 1px solid #96999f;
    border-bottom: 1px solid #96999f;
}

td {
    height: 20px;
    padding: 0 5px;
    line-height: 18px;
    border-right: 1px solid #c9dbf7;
}

td:nth-child(n+5) {
    text-align: right;
}

tbody tr:nth-child(2) td {
    background: #e1ecff;
}

.current {
    font-weight: 700;
    background: #fcc560;
}

.selected {
    color: #fff;
    background: #2d1c06;
}

.sorted svg {
    float: right;
    width: 9px;
    height: 8px;
    margin: 5px 2px 0 -9px;
}

td.mark {
    padding: 0 2px;
}

.mark input[type="checkbox"] {
    display: block;
    width: 12px;
    height: 12px;
    border: 1px solid #ccc;
    border-top-color: #222;
    border-left-color: #222;
    background: #e4edfb;
}

.grid-scroll {
    display: flex;
    flex-direction: column;
    align-items: center;
    justify-content: space-between;
    width: 17px;
    padding: 4px 0;
    background: #f0f0f0;
}

.grid-scroll svg {
    width: 8px;
    height: 7px;
    fill: none;
    stroke: #606060;
    stroke-width: 2;
}

/* Agendy vpravo */
.agendas {
    flex: none;
    width: 114px;
    text-align: center;
    background: linear-gradient(90deg, #e4eeff, #84aae6);
    border: 1px solid var(--line);
}

.agendas h2 {
    height: 17px;
    font-size: 12px;
    font-weight: 400;
    line-height: 17px;
    background: linear-gradient(#e2ecff, #b3cbf6);
    border-right: 1px solid #41598c;
    border-bottom: 1px solid #41598c;
}

.agendas button {
    margin-top: 6px;
}

.agendas button svg {
    display: block;
    width: 36px;
    height: 34px;
    margin: 0 auto 2px;
}

/* Stavový řádek */
.status {
    display: flex;
    align-items: center;
    height: 19px;
    background: #f0f0f0;
    border-top: 1px solid #d4d4d4;
}

.status span {
    display: flex;
    align-items: center;
    height: 17px;
    padding-left: 4px;
    border-left: 1px solid #d4d4d4;
}

.status .path {
    flex: 1;
    padding-left: 2px;
    border: none;
}

.status .company {
    width: 153px;
    padding: 0;
    border: none;
}

.s-year {
    width: 39px;
}

.s-mid {
    width: 30px;
}

.s-small {
    width: 24px;
}

.s-wide {
    width: 100px;
}

.s-size {
    width: 20px;
}

.check {
    width: 13px;
    height: 13px;
}

.round {
    width: 16px;
    height: 16px;
}

.s-size svg {
    width: 9px;
    height: 9px;
    margin: 6px 0 0 4px;
}
```
